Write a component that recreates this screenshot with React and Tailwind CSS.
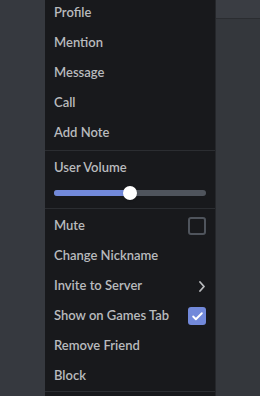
import { Check } from 'lucide-react';

function Item({ label, children }) {
    return (
        <div className="flex items-center justify-between h-[30px] px-[9px]">
            <span>{label}</span>
            {children}
        </div>
    );
}

export default function App() {
    return (
        <div
            className="flex w-[260px] h-[396px] overflow-hidden bg-[#36393f] text-[#b9bbbe] text-[13px] font-semibold"
            style={{ fontFamily: 'Lato, "Noto Sans", sans-serif' }}
        >
            {/* left channel area */}
            <div className="w-[45px] bg-[#36393f]" />

            {/* context menu */}
            <div className="w-[170px] bg-[#18191c] flex flex-col">
                <div className="-mt-[2px] pb-[2px] border-b border-[#2b2d31]">
                    <Item label="Profile" />
                    <Item label="Mention" />
                    <Item label="Message" />
                    <Item label="Call" />
                    <Item label="Add Note" />
                </div>

                <div className="h-[58px] border-b border-[#2b2d31]">
                    <div className="flex items-center h-[31px] pt-[2px] px-[9px]">User Volume</div>
                    <div className="px-[9px] pt-[8px]">
                        <div className="relative h-[6px] rounded-full bg-[#4f545c]">
                            <div className="h-full w-[76px] rounded-full bg-[#7289da]" />
                            <div className="absolute left-[69px] top-[-4px] w-[14px] h-[14px] rounded-full bg-white shadow" />
                        </div>
                    </div>
                </div>

                <div className="pt-[2px] border-b border-[#2b2d31]">
                    <Item label="Mute">
                        <div className="w-[18px] h-[18px] rounded-[3px] border-2 border-[#4f545c]" />
                    </Item>
                    <Item label="Change Nickname" />
                    <Item label="Invite to Server">
                        <svg width="6" height="11" viewBox="0 0 6 11" className="mr-[1px]">
                            <path d="M1 1 L5 5.5 L1 10" fill="none" stroke="#b9bbbe" strokeWidth="1.8" strokeLinecap="round" strokeLinejoin="round" />
                        </svg>
                    </Item>
                    <Item label="Show on Games Tab">
                        <div className="w-[18px] h-[18px] rounded-[3px] bg-[#7289da] flex items-center justify-center">
                            <Check size={13} strokeWidth={3.5} className="text-white" />
                        </div>
                    </Item>
                    <Item label="Remove Friend" />
                    <Item label="Block" />
                </div>
            </div>

            {/* right chat area */}
            <div className="flex-1 flex flex-col border-l border-[#25272b]">
                <div className="h-[19px] bg-[#3a3d43] border-b border-[#2b2d31]" />
                <div className="flex-1 bg-[#34373c]" />
            </div>
        </div>
    );
}
